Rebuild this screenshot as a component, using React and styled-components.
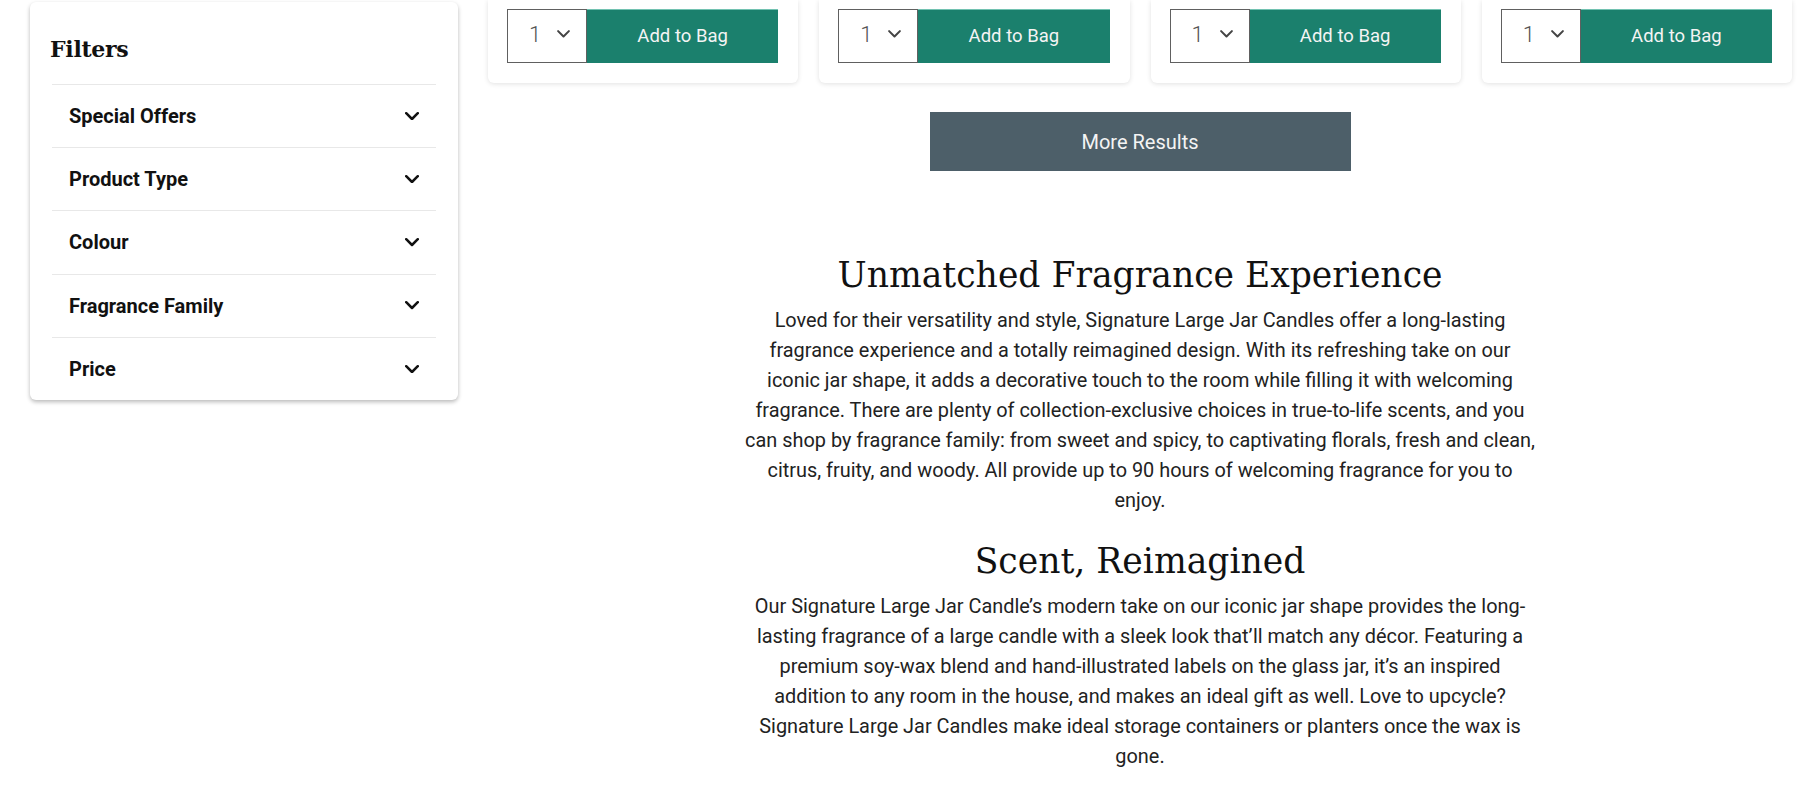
import React from "react";
import styled, { createGlobalStyle } from "styled-components";

const GlobalStyle = createGlobalStyle`
  html, body {
    margin: 0;
    background: #fff;
    font-family: Roboto, "Liberation Sans", Arial, sans-serif;
    color: #222;
  }
  * { box-sizing: border-box; }
`;

const Page = styled.div`
  display: flex;
  align-items: flex-start;
  gap: 30px;
  padding: 0 16px 0 30px;
  width: 1808px;
  height: 801px;
  overflow: hidden;
`;

const Sidebar = styled.aside`
  flex: 0 0 428px;
  margin-top: 2px;
  padding: 0 22px 0 20px;
  background: #fff;
  border-radius: 6px;
  box-shadow: 0 2px 4px rgba(0, 0, 0, 0.28);
`;

const SidebarTitle = styled.h2`
  margin: 0;
  padding: 32px 0 20px;
  font-family: "DejaVu Serif", "Liberation Serif", serif;
  font-weight: 700;
  font-size: 22px;
  line-height: 30px;
  letter-spacing: -0.3px;
  color: #111;
`;

const FilterList = styled.ul`
  list-style: none;
  margin: 0 0 0 2px;
  padding: 0;
`;

const FilterRow = styled.li`
  display: flex;
  align-items: center;
  justify-content: space-between;
  height: 63.2px;
  padding: 0 17px;
  border-top: 1px solid #e8e8e8;
  font-size: 20px;
  font-weight: 700;
  color: #111;
  cursor: pointer;
`;

const Main = styled.main`
  flex: 1;
  min-width: 0;
`;

const CardGrid = styled.div`
  display: grid;
  grid-template-columns: repeat(4, 1fr);
  gap: 21px;
`;

const Card = styled.div`
  background: #fff;
  border-radius: 0 0 6px 6px;
  box-shadow: 0 1px 5px rgba(0, 0, 0, 0.12);
  padding: 9px 20px 20px 19px;
`;

const AddRow = styled.div`
  display: flex;
  height: 54px;
`;

const QtySelect = styled.div`
  flex: 0 0 80px;
  display: flex;
  align-items: center;
  gap: 16px;
  padding: 0 0 4px 21px;
  border: 1px solid #606060;
  font-size: 22px;
  font-weight: 300;
  color: #555;
  background: #fff;
`;

const AddButton = styled.button`
  flex: 1;
  border: none;
  background: #1b806d;
  box-shadow: inset 0 1px 0 #72c2b1;
  color: #f4f4f4;
  font-family: inherit;
  font-size: 18.5px;
  cursor: pointer;
`;

const MoreButton = styled.button`
  display: block;
  width: 421px;
  height: 59px;
  margin: 29px auto 0;
  border: none;
  background: #4d5f69;
  color: #f4f4f4;
  font-family: inherit;
  font-size: 20px;
  cursor: pointer;
`;

const Article = styled.section`
  margin-top: 82px;
  text-align: center;
`;

const Heading = styled.h2`
  margin: 0;
  font-family: "DejaVu Serif", "Liberation Serif", serif;
  font-weight: 400;
  font-size: 34.6px;
  line-height: 44px;
  color: #111;
`;

const Copy = styled.p`
  margin: 9px 0 23px;
  font-size: 19.9px;
  line-height: 30px;
  color: #222;
  white-space: nowrap;
`;

const Chevron = ({ size = 14, color = "#111", stroke = 2.5 }) => (
  <svg width={size} height={size * 0.6} viewBox="0 0 14 8.4" fill="none">
    <path
      d="M1.2 1.2 L7 7 L12.8 1.2"
      stroke={color}
      strokeWidth={stroke}
      strokeLinecap="round"
      strokeLinejoin="round"
    />
  </svg>
);

const filters = ["Special Offers", "Product Type", "Colour", "Fragrance Family", "Price"];

const sections = [
  {
    title: "Unmatched Fragrance Experience",
    lines: [
      "Loved for their versatility and style, Signature Large Jar Candles offer a long-lasting",
      "fragrance experience and a totally reimagined design. With its refreshing take on our",
      "iconic jar shape, it adds a decorative touch to the room while filling it with welcoming",
      "fragrance. There are plenty of collection-exclusive choices in true-to-life scents, and you",
      "can shop by fragrance family: from sweet and spicy, to captivating florals, fresh and clean,",
      "citrus, fruity, and woody. All provide up to 90 hours of welcoming fragrance for you to",
      "enjoy.",
    ],
  },
  {
    title: "Scent, Reimagined",
    lines: [
      "Our Signature Large Jar Candle\u2019s modern take on our iconic jar shape provides the long-",
      "lasting fragrance of a large candle with a sleek look that\u2019ll match any d\u00e9cor. Featuring a",
      "premium soy-wax blend and hand-illustrated labels on the glass jar, it\u2019s an inspired",
      "addition to any room in the house, and makes an ideal gift as well. Love to upcycle?",
      "Signature Large Jar Candles make ideal storage containers or planters once the wax is",
      "gone.",
    ],
  },
];

export default function App() {
  return (
    <>
      <GlobalStyle />
      <Page>
        <Sidebar>
          <SidebarTitle>Filters</SidebarTitle>
          <FilterList>
            {filters.map((f) => (
              <FilterRow key={f}>
                {f}
                <Chevron />
              </FilterRow>
            ))}
          </FilterList>
        </Sidebar>

        <Main>
          <CardGrid>
            {[0, 1, 2, 3].map((i) => (
              <Card key={i}>
                <AddRow>
                  <QtySelect>
                    1
                    <Chevron size={13} color="#444" stroke={2.2} />
                  </QtySelect>
                  <AddButton>Add to Bag</AddButton>
                </AddRow>
              </Card>
            ))}
          </CardGrid>

          <MoreButton>More Results</MoreButton>

          <Article>
            {sections.map((s) => (
              <React.Fragment key={s.title}>
                <Heading>{s.title}</Heading>
                <Copy>
                  {s.lines.map((line, i) => (
                    <React.Fragment key={i}>
                      {line}
                      {i < s.lines.length - 1 && <br />}
                    </React.Fragment>
                  ))}
                </Copy>
              </React.Fragment>
            ))}
          </Article>
        </Main>
      </Page>
    </>
  );
}
